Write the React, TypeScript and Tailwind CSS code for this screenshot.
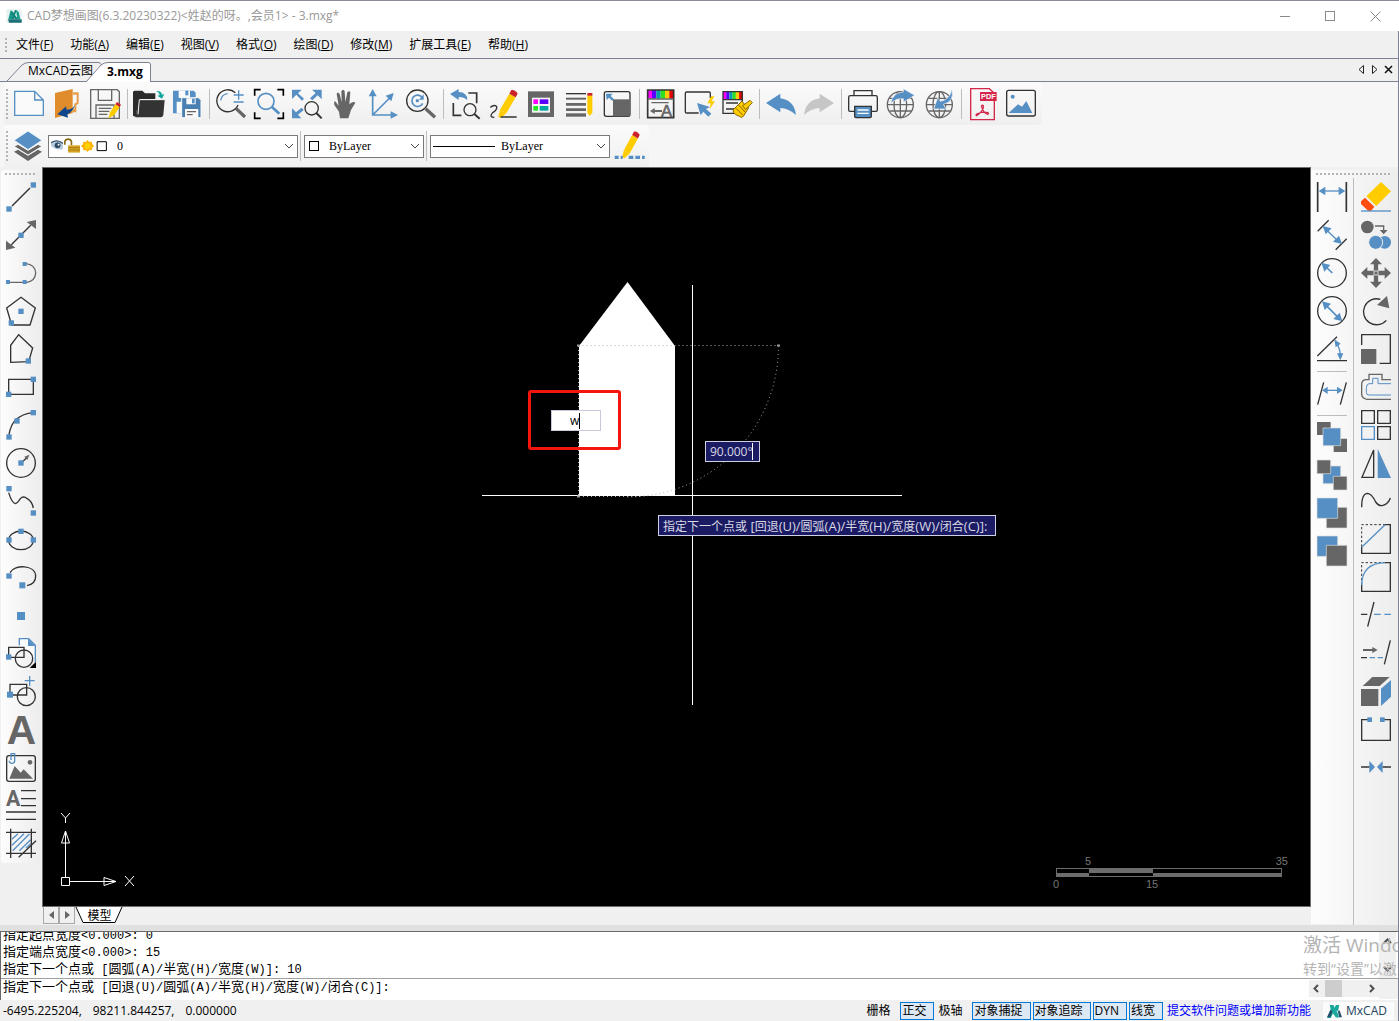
import type { ReactNode } from "react";

const BLUE = "#568fc4";
const GRAY = "#666666";
const INK = "#333333";

type Tool = { name: string; art: ReactNode } | "sep";

const Node = ({ x, y, s = 16 }: { x: number; y: number; s?: number }) => (
  <rect x={x - s / 2} y={y - s / 2} width={s} height={s} fill={BLUE} stroke="none" />
);

const Pencil = () => (
  <g stroke="none">
    <path d="M31 84l5-22 19 11-17 14z" fill="#ffcc00" />
    <path d="M36 62L64 14l19 11-28 48z" fill="#ffcc00" />
    <path d="M64 14l6-11q12-2 19 11l-6 11z" fill="#cc2229" />
  </g>
);

const Rainbow = ({ x, y, w, h }: { x: number; y: number; w: number; h: number }) => (
  <g stroke="none">
    {["#ff00ff", "#5a00ff", "#00a0a0", "#30e020", "#ffcc00", "#e00000"].map((c, i) => (
      <rect key={c} x={x + (i * w) / 6} y={y} width={w / 6} height={h} fill={c} />
    ))}
  </g>
);

const Globe = () => (
  <g stroke={GRAY} strokeWidth={4}>
    <circle cx="43" cy="47" r="39" />
    <ellipse cx="43" cy="47" rx="19" ry="39" />
    <path d="M43 8v78M4 47h78M11 28h64M11 66h64" />
  </g>
);

const topTools: Tool[] = [
  { name: "新建", art: <path d="M2 7h60l26 26v46H2zM62 7v26h26" stroke={BLUE} fill="#fafafa" /> },
  {
    name: "打开云图",
    art: (
      <g stroke="none">
        <path d="M9 12L62 0v72L9 87z" fill="#e08c2c" />
        <path d="M62 10h18v34l-7 4v22h-11v-10h5V44l7-4V17H62z" fill="#e8a04c" />
        <path d="M70 44Q66 60 44 62l-2-10-26 24 32 10-2-10Q64 68 70 44z" fill="#10478c" />
      </g>
    ),
  },
  {
    name: "保存",
    art: (
      <>
        <path d="M2 2h80l6 6v80H2zM25 2v32h40V2M18 88V48h54v40M26 58h38M26 67h32M26 76h26" stroke={GRAY} />
        <path d="M56 88l4-18 16-24 13 8-16 24z" fill="#ffcc00" stroke="none" />
        <path d="M76 46l5-7 12 8-4 7z" fill="#cc2229" stroke="none" />
      </>
    ),
  },
  "sep",
  {
    name: "打开",
    art: (
      <g stroke="none">
        <path d="M-3 8l4-3h24l8 8h31v17H20L8 66l-3 18-8-4z" fill="#2b2b2b" />
        <path d="M14 33h78l-4 45q-2 7-8 7H4z" fill={INK} />
        <path d="M12 76L16 32h76" stroke="#f4f4f4" strokeWidth="3" fill="none" />
        <path d="M66 6q16-2 18 11l7-2-7 14-14-9 7-1q-1-9-11-13z" fill="#10a59c" />
      </g>
    ),
  },
  {
    name: "全部保存",
    art: (
      <g stroke="none">
        <path d="M3 5h62l6 6v62H3z" fill={BLUE} />
        <path d="M20 5h34v22H20zM14 38h16v35H14z" fill="#fafafa" />
        <path d="M29 26h50l8 8v52H29z" fill="#4a7fb2" stroke="#fafafa" strokeWidth="3" />
        <path d="M43 28h28v18H43zM39 60h40v26H39z" fill="#fafafa" />
        <path d="M60 29h8v14h-8z" fill={BLUE} />
        <path d="M45 68h27M45 77h17" stroke={GRAY} strokeWidth="4" />
        <path d="M40 5h9v14h-9z" fill={BLUE} />
      </g>
    ),
  },
  "sep",
  {
    name: "实时缩放",
    art: (
      <>
        <path d="M58 11A33 33 0 1 0 66 48" />
        <path d="M14 34Q17 16 35 14M53 18h30M68 4v28M53 39h30" stroke={BLUE} />
        <path d="M60 58l27 26" stroke={GRAY} strokeWidth={10} />
      </>
    ),
  },
  {
    name: "窗口缩放",
    art: (
      <>
        <path d="M2 20V2h18M70 2h18v18M88 70v18H70M20 88H2V70" stroke="#000" strokeWidth={5} />
        <circle cx="36" cy="37" r="24" stroke={BLUE} strokeWidth={5} />
        <path d="M54 54l22 20" stroke={BLUE} strokeWidth={8} />
      </>
    ),
  },
  {
    name: "范围缩放",
    art: (
      <>
        <path d="M0 2h29L18 13l18 16-6 6L13 17 0 30zM89 2v29L77 19 61 34l-7-6 17-16L60 2zM0 88V58l12 12 17-14 6 7-17 14 10 11z" fill={BLUE} stroke="none" />
        <circle cx="59" cy="58" r="20" />
        <path d="M73 72l16 16" strokeWidth={6} />
      </>
    ),
  },
  {
    name: "平移",
    art: (
      <path
        d="M30 88l-3-20L13 48q-2-15 4-10l9 12L20 15q3-9 9 0l6 25-1-33q6-9 10 0l2 32 6-29q6-7 9 0l-3 36 5-4q8-5 13-1L63 63l-8 25z"
        fill={GRAY}
        stroke="none"
      />
    ),
  },
  {
    name: "坐标系",
    art: (
      <>
        <path d="M14 18v60h58M14 78L68 24" stroke={BLUE} strokeWidth={5} />
        <path d="M2 22L14 0l12 22zM68 67l22 11-22 11zM77 12L70 37 53 20z" fill={BLUE} stroke="none" />
      </>
    ),
  },
  {
    name: "动态观察",
    art: (
      <>
        <circle cx="34" cy="35" r="32" />
        <path d="M49 26A17 17 0 1 0 50 43" stroke={BLUE} strokeWidth={5} />
        <path d="M53 16v16H39z" fill={BLUE} stroke="none" />
        <circle cx="34" cy="35" r="5" fill={BLUE} stroke="none" />
        <path d="M59 59l28 26" stroke={GRAY} strokeWidth={10} />
      </>
    ),
  },
  "sep",
  {
    name: "上一视图",
    art: (
      <>
        <path d="M0 15L26 0v9q26 1 26 24Q42 24 26 24v9z" fill={BLUE} stroke="none" />
        <path d="M55 12h25v31M10 42v37h24" strokeWidth={5} />
        <circle cx="60" cy="62" r="18" />
        <path d="M73 75l16 14" strokeWidth={6} />
      </>
    ),
  },
  {
    name: "绘制",
    art: (
      <>
        <Pencil />
        <path d="M7 55q14-10 19-2 2 9-12 18-12 14 5 14M38 84h48" />
      </>
    ),
  },
  {
    name: "图块",
    art: (
      <g stroke="none">
        <path d="M6 7h78v77H6z" fill={GRAY} />
        <path d="M18 26h54v45H18z" fill="#f4f4f4" />
        <path d="M22 31h14v14H22z" fill="#ff00ff" />
        <path d="M41 31h26v14H41z" fill="#5a00ff" />
        <path d="M22 51h14v14H22z" fill="#20e820" />
        <path d="M41 51h26v14H41z" fill="#00a7a0" />
      </g>
    ),
  },
  {
    name: "线型",
    art: (
      <>
        <path d="M6 14h60" strokeWidth={4} />
        <path d="M6 29h60" stroke={GRAY} strokeWidth={6} />
        <path d="M6 46h60M6 62h60" stroke={GRAY} strokeWidth={8} />
        <path d="M6 78h60" stroke={GRAY} strokeWidth={10} />
        <path d="M70 19h15v52l-8 10-7-10z" fill="#ffcc00" stroke="none" />
        <path d="M70 12h15v8H70z" fill="#cc2229" stroke="none" />
      </>
    ),
  },
  {
    name: "比例",
    art: (
      <>
        <rect x="7" y="8" width="77" height="74" rx="6" />
        <path d="M33 31h50v51H33z" fill={GRAY} stroke="none" />
        <path d="M12 14h20l-6 7 10 10-5 5-10-10-7 7z" fill={BLUE} stroke="none" />
      </>
    ),
  },
  "sep",
  {
    name: "文字样式",
    art: (
      <>
        <Rainbow x={5} y={3} w={78} h={26} />
        <path d="M5 3h78v83H5z" strokeWidth={5} />
        <path d="M5 30h78M16 41h52" stroke={GRAY} />
        <path d="M20 66h28" stroke={GRAY} strokeWidth={6} />
        <path d="M12 66l14-9v18z" fill={GRAY} stroke="none" />
        <text x="45" y="83" fontSize="50" fontFamily="Liberation Sans" fill={GRAY} stroke={GRAY} strokeWidth="2">A</text>
      </>
    ),
  },
  {
    name: "快速选择",
    art: (
      <>
        <path d="M44 72H8q-4 0-4-4V13q0-4 4-4h67q4 0 4 4v14" />
        <path d="M39 42l39 12-12 6 16 14-9 9-15-15-8 11z" fill={BLUE} stroke="none" />
        <path d="M82 22L70 43h10l-3 17 16-23H83l8-15z" fill="#ffcc00" stroke="none" />
      </>
    ),
  },
  {
    name: "特性匹配",
    art: (
      <>
        <Rainbow x={3} y={8} w={58} h={24} />
        <path d="M3 8h58v65H3zM3 32h58M12 42h36M12 60h26" />
        <path d="M34 62l26-26q6 12 20 20L64 82q-6 6-12 0-12-4-18-12z" fill="#ffcc00" stroke="#8a6500" strokeWidth="3" />
        <path d="M62 50l22-16 7 7-20 21z" fill="#ffcc00" stroke="#8a6500" strokeWidth="3" />
        <path d="M42 58l20 20M50 48l20 22" stroke="#8a6500" strokeWidth="3" />
      </>
    ),
  },
  "sep",
  { name: "撤销", art: <path d="M0 42l43-28v14q42 6 47 50Q68 58 43 57v13z" fill={BLUE} stroke="none" /> },
  { name: "重做", art: <path d="M90 42L47 14v14Q5 34 0 78q22-20 47-21v13z" fill="#c6c6c6" stroke="none" /> },
  "sep",
  {
    name: "打印",
    art: (
      <>
        <path d="M18 20V5h54v15M20 67H6q-4 0-4-4V25q0-5 5-5h76q5 0 5 5v38q0 4-4 4H70" />
        <path d="M20 52h50v30q0 4-4 4H24q-4 0-4-4z" fill={BLUE} />
        <path d="M28 63h34M28 73h34" stroke="#fff" />
      </>
    ),
  },
  {
    name: "发布",
    art: (
      <>
        <Globe />
        <path d="M14 44Q20 10 52 9V-1l34 20-34 21V29Q30 27 14 44z" fill={BLUE} stroke="#f6f6f6" strokeWidth={2} />
      </>
    ),
  },
  {
    name: "下载",
    art: (
      <g transform="translate(3 0)">
        <Globe />
        <path d="M80 0q10 38-25 46l9 14H26l12-34 8 11Q76 32 80 0z" fill={BLUE} stroke="#f6f6f6" strokeWidth={2} />
      </g>
    ),
  },
  "sep",
  {
    name: "输出 PDF",
    art: (
      <>
        <path d="M8-1h56l15 14v79H8z" stroke="#d3274b" />
        <path d="M36 9h50v27H36z" fill="#d3274b" stroke="none" />
        <text x="39" y="31" fontSize="22" fontWeight="700" fontFamily="Liberation Sans" fill="#fff" stroke="none">PDF</text>
        <path d="M40 50q8-4 6 6-4 14-20 24-5-2 3-6 14-6 28-4 8 2 2 6-14-4-19-26" stroke="#d3274b" />
      </>
    ),
  },
  {
    name: "输出图片",
    art: (
      <>
        <rect x="2" y="4" width="86" height="77" rx="6" />
        <circle cx="20" cy="23" r="6" fill={BLUE} stroke="none" />
        <path d="M8 72l28-26 12 7 13-17 18 36z" fill={BLUE} stroke="none" />
      </>
    ),
  },
];

const drawTools: Tool[] = [
  { name: "直线", art: <><path d="M18 72L72 18" /><Node x={9} y={81} /><Node x={82} y={9} /></> },
  {
    name: "构造线",
    art: (
      <>
        <path d="M16 74l58-58" />
        <path d="M90 0v27L62 6zM0 90V62l28 21z" fill={GRAY} stroke="none" />
        <Node x={45} y={46} />
      </>
    ),
  },
  {
    name: "多段线",
    art: (
      <>
        <path d="M6 73h56q26-4 27-28-1-24-28-28H56" stroke={GRAY} />
        <Node x={6} y={72} s={12} /><Node x={56} y={72} s={12} /><Node x={56} y={18} s={12} />
      </>
    ),
  },
  { name: "正多边形", art: <><path d="M45 4l43 32-16 51H17L2 36z" /><Node x={45} y={46} /><Node x={16} y={81} /></> },
  { name: "多边形", art: <><path d="M38 2l42 40-12 41-54 2V34z" /><Node x={67} y={81} /></> },
  { name: "矩形", art: <><path d="M8 22h74v45H8z" /><Node x={8} y={67} /><Node x={82} y={22} /></> },
  { name: "圆弧", art: <><path d="M9 74Q18 14 82 8" /><Node x={9} y={81} /><Node x={33} y={33} /><Node x={82} y={8} /></> },
  {
    name: "圆",
    art: (
      <>
        <circle cx="45" cy="45" r="43" />
        <path d="M45 45l20-18" />
        <path d="M70 20l-6 16-9-10z" fill={GRAY} stroke="none" />
        <Node x={45} y={45} />
      </>
    ),
  },
  {
    name: "样条曲线",
    art: (
      <>
        <path d="M8 20Q18 52 28 53 34 52 43 38 52 28 64 38 78 46 82 66" />
        <Node x={9} y={8} /><Node x={82} y={81} />
      </>
    ),
  },
  {
    name: "椭圆",
    art: <><ellipse cx="45" cy="49" rx="37" ry="28" /><Node x={9} y={48} /><Node x={82} y={48} /><Node x={45} y={22} /></>,
  },
  { name: "椭圆弧", art: <><path d="M12 32C26 6 88 8 89 42q0 24-26 29" /><Node x={9} y={42} /><Node x={49} y={70} s={18} /></> },
  { name: "点", art: <Node x={45} y={48} s={24} /> },
  {
    name: "插入块",
    art: (
      <>
        <path d="M40 22V2h28l20 20v50" stroke={BLUE} fill="#fafafa" />
        <path d="M66 2l22 22H66z" fill={BLUE} stroke="none" />
        <path d="M8 28h46v30H8z" />
        <circle cx="54" cy="62" r="26" />
        <path d="M90 71v19H71z" fill="#000" stroke="none" />
        <Node x={8} y={57} />
      </>
    ),
  },
  {
    name: "创建块",
    art: (
      <>
        <path d="M12 25h50v32H12z" />
        <circle cx="61" cy="62" r="27" />
        <path d="M56 14h30M71 0v30" stroke={BLUE} />
        <Node x={12} y={56} s={18} />
      </>
    ),
  },
  {
    name: "单行文字",
    art: (
      <text x="46" y="90" textAnchor="middle" fontSize="122" fontWeight="700" fontFamily="Liberation Sans" fill={GRAY} stroke="none">A</text>
    ),
  },
  {
    name: "插入图片",
    art: (
      <>
        <rect x="2" y="11" width="86" height="77" rx="7" />
        <path d="M10 80l16-38 18 20 9-10 28 28z" fill={GRAY} stroke="none" />
        <circle cx="72" cy="31" r="7" fill={GRAY} stroke="none" />
        <path d="M10 26q0 8 8 8t8-8V5H15v19" stroke={BLUE} />
      </>
    ),
  },
  {
    name: "多行文字",
    art: (
      <>
        <text x="0" y="48" fontSize="64" fontWeight="700" fontFamily="Roboto" fill={GRAY} stroke="none">A</text>
        <path d="M45 2h45M45 26h45M45 47h45M0 66h90M0 88h90" />
      </>
    ),
  },
  {
    name: "图案填充",
    art: (
      <>
        <path d="M18 34l18-17M18 52l36-35M20 68l50-50M40 68l34-33M60 60l14-13" stroke={BLUE} />
        <path d="M14 2v88M76 2v88M0 13h90M0 76h90M38 88l52-50" />
      </>
    ),
  },
];

const dimTools: Tool[] = [
  {
    name: "线性标注",
    art: (
      <>
        <path d="M2 0v90M88 0v90" strokeWidth={5} />
        <path d="M20 27h50" stroke={BLUE} />
        <path d="M5 27l20-13v26zM85 27L65 14v26z" fill={BLUE} stroke="none" />
      </>
    ),
  },
  {
    name: "对齐标注",
    art: (
      <>
        <path d="M2 34L35 1M56 89l33-33" />
        <path d="M28 29l35 34" stroke={BLUE} />
        <path d="M17 18l27 7-18 18zM75 72l-27-7 18-18z" fill={BLUE} stroke="none" />
      </>
    ),
  },
  {
    name: "半径标注",
    art: (
      <>
        <circle cx="45" cy="45" r="43" />
        <path d="M25 25l21 20" stroke={BLUE} strokeWidth={5} />
        <path d="M13 14l27 7-18 20z" fill={BLUE} stroke="none" />
      </>
    ),
  },
  {
    name: "直径标注",
    art: (
      <>
        <circle cx="45" cy="45" r="43" />
        <path d="M28 29l36 36" stroke={BLUE} strokeWidth={5} />
        <path d="M15 16l27 7-19 19zM76 76l-27-7 19-19z" fill={BLUE} stroke="none" />
      </>
    ),
  },
  {
    name: "角度标注",
    art: (
      <>
        <path d="M1 66L60 8M0 80h90" />
        <path d="M58 26q12 18 12 42" stroke={BLUE} />
        <path d="M52 16l19 13-15 11zM70 79L60 58h19z" fill={BLUE} stroke="none" />
      </>
    ),
  },
  "sep",
  {
    name: "倾斜标注",
    art: (
      <>
        <path d="M2 80L20 13M70 80l18-67" stroke={INK} />
        <path d="M28 37h36" stroke={BLUE} />
        <path d="M15 37l17-11v22zM77 37L60 26v22z" fill={BLUE} stroke="none" />
      </>
    ),
  },
  "sep",
  {
    name: "前置",
    art: (
      <g stroke="none">
        <path d="M0 0h41v39H0zM50 50h40v40H50z" fill={GRAY} />
        <path d="M18 18h53v53H18z" fill={BLUE} stroke="#ddd" strokeWidth="2" />
      </g>
    ),
  },
  {
    name: "后置",
    art: (
      <g stroke="#ddd" strokeWidth="2">
        <path d="M18 18h53v53H18z" fill={BLUE} />
        <path d="M0 0h41v41H0zM49 49h41v41H49z" fill={GRAY} />
      </g>
    ),
  },
  {
    name: "置于之上",
    art: (
      <g stroke="#ddd" strokeWidth="2">
        <path d="M28 28h62v62H28z" fill={GRAY} />
        <path d="M0 0h62v61H0z" fill={BLUE} />
      </g>
    ),
  },
  {
    name: "置于之下",
    art: (
      <g stroke="#ddd" strokeWidth="2">
        <path d="M0 0h62v61H0z" fill={BLUE} />
        <path d="M28 28h62v62H28z" fill={GRAY} />
      </g>
    ),
  },
];

const editTools: Tool[] = [
  {
    name: "删除",
    art: (
      <g stroke="none">
        <path d="M60 0l30 28-44 44-30-29z" fill="#ffcc00" />
        <path d="M12 47l28 27-10 13H22L0 66v-8z" fill="#ff4d0d" />
        <path d="M0 85h90v4H0z" fill={BLUE} />
      </g>
    ),
  },
  {
    name: "复制",
    art: (
      <>
        <circle cx="19" cy="21" r="19" fill={GRAY} stroke="none" />
        <path d="M42 18h26v14" stroke={GRAY} />
        <path d="M56 30h24L68 43z" fill={GRAY} stroke="none" />
        <circle cx="71" cy="67" r="19" fill={BLUE} stroke="none" />
        <circle cx="44" cy="67" r="21" fill={BLUE} stroke="#f2f2f2" strokeWidth={3} />
      </>
    ),
  },
  {
    name: "移动",
    art: (
      <>
        <path d="M45 12v66M12 45h66" stroke={GRAY} strokeWidth={13} />
        <path d="M27 19L45 0l18 19zM27 71l18 19 18-19zM19 27L0 45l19 18zM71 27l19 18-19 18z" fill={GRAY} stroke="none" />
        <path d="M39 39h12v12H39z" stroke="#ddd" strokeWidth={3} />
      </>
    ),
  },
  {
    name: "旋转",
    art: (
      <>
        <path d="M58 10A39 39 0 1 0 76 73" />
        <path d="M78 0l7 37-37-10z" fill={GRAY} stroke="none" />
      </>
    ),
  },
  {
    name: "缩放",
    art: (
      <>
        <path d="M2 33V2h86v86H56" />
        <path d="M0 45h46v45H0z" fill={GRAY} stroke="none" />
      </>
    ),
  },
  {
    name: "偏移",
    art: (
      <>
        <path d="M90 23H63V7H24v16H14Q2 24 2 38v30q2 12 16 14h72" stroke={GRAY} />
        <path d="M90 35H51V19H35v16H24q-8 2-8 12v14q0 8 8 8h66" stroke={BLUE} strokeWidth={3} />
      </>
    ),
  },
  { name: "阵列", art: <><path d="M2 2h38v38H2zM50 2h38v38H50zM50 50h38v38H50z" /><path d="M2 50h38v38H2z" stroke={BLUE} /></> },
  { name: "镜像", art: <><path d="M3 88L38 6v82z" /><path d="M50 2l40 88H50z" fill={BLUE} stroke="none" /></> },
  { name: "样条编辑", art: <path d="M2 64Q2 24 18 22 32 22 44 48 54 62 66 58 82 54 88 36" /> },
  {
    name: "倒角",
    art: (
      <>
        <path d="M2 68V2h70" strokeDasharray="7 6" strokeWidth={3} />
        <path d="M2 68v20h86V2H72" />
        <path d="M2 70L72 2" stroke={BLUE} />
      </>
    ),
  },
  {
    name: "圆角",
    art: (
      <>
        <path d="M2 68V2h70" strokeDasharray="7 6" strokeWidth={3} />
        <path d="M2 68v20h86V2H72" />
        <path d="M2 70Q2 4 72 2" stroke={BLUE} />
      </>
    ),
  },
  { name: "修剪", art: <><path d="M20 80L39 6M0 43h19" /><path d="M39 43h20M70 43h20" stroke={BLUE} /></> },
  {
    name: "延伸",
    art: (
      <>
        <path d="M70 79L88 7M0 59h18M6 36h30" />
        <path d="M50 36L34 27v18z" fill={GRAY} stroke="none" />
        <path d="M26 59h16M50 59h16" stroke={BLUE} />
      </>
    ),
  },
  {
    name: "长方体",
    art: (
      <g stroke="none">
        <path d="M0 39h52v51H0z" fill={GRAY} />
        <path d="M5 30L34 3h52L56 30z" fill={GRAY} />
        <path d="M60 38l30-26v50L60 90z" fill={BLUE} />
      </g>
    ),
  },
  { name: "打断", art: <><path d="M26 17H2v62h86V17H64" /><Node x={26} y={17} s={14} /><Node x={64} y={17} s={14} /></> },
  { name: "合并", art: <><path d="M0 45h26M64 45h26" /><path d="M25 27l17 18-17 18zM65 27L48 45l17 18z" fill={BLUE} stroke="none" /></> },
];

const menus = [
  ["文件", "F"], ["功能", "A"], ["编辑", "E"], ["视图", "V"], ["格式", "O"],
  ["绘图", "D"], ["修改", "M"], ["扩展工具", "E"], ["帮助", "H"],
];

const modes = [
  { label: "栅格", on: false },
  { label: "正交", on: true },
  { label: "极轴", on: false },
  { label: "对象捕捉", on: true },
  { label: "对象追踪", on: true },
  { label: "DYN", on: true },
  { label: "线宽", on: true },
];

const coords = ["-6495.225204,", "98211.844257,", "0.000000"];
const history = ["指定起点宽度<0.000>: 0", "指定端点宽度<0.000>: 15", "指定下一个点或 [圆弧(A)/半宽(H)/宽度(W)]: 10"];
const promptText = "指定下一个点或 [回退(U)/圆弧(A)/半宽(H)/宽度(W)/闭合(C)]:";

function ToolButton({ name, art }: { name: string; art: ReactNode }) {
  return (
    <button type="button" aria-label={name} className="flex size-[38px] shrink-0 items-center justify-center">
      <svg viewBox="0 0 90 90" className="size-[30px] overflow-visible" fill="none" stroke={INK} strokeWidth={4}>
        {art}
      </svg>
    </button>
  );
}

function GripV({ className }: { className: string }) {
  return (
    <span className={`w-[2px] shrink-0 bg-[repeating-linear-gradient(#b4b4b4_0_2px,transparent_2px_4px)] ${className}`} />
  );
}

function GripH({ className }: { className: string }) {
  return (
    <span className={`block h-[2px] bg-[repeating-linear-gradient(90deg,#b4b4b4_0_2px,transparent_2px_4px)] ${className}`} />
  );
}

function Column({ tools }: { tools: Tool[] }) {
  return (
    <div className="flex flex-col items-center">
      {tools.map((t, i) =>
        t === "sep" ? <span key={i} className="mb-[2px] mt-[3px] h-px w-[30px] bg-[#bdbdbd]" /> : <ToolButton key={i} {...t} />
      )}
    </div>
  );
}

function Combo({ label, value, width, children }: { label: string; value: string; width: string; children: ReactNode }) {
  return (
    <div className={`relative flex h-[23px] items-center border border-[#7a7a7a] bg-white ${width}`}>
      <span className="pointer-events-none absolute left-[2px] flex items-center">{children}</span>
      <select
        aria-label={label}
        defaultValue={value}
        className={`h-full w-full appearance-none bg-transparent font-[Liberation_Serif,serif] text-xs text-black outline-none ${
          label === "图层" ? "pl-[68px]" : label === "颜色" ? "pl-6" : "pl-[70px]"
        }`}
      >
        <option>{value}</option>
      </select>
      <svg viewBox="0 0 10 6" className="pointer-events-none absolute right-[3px] h-[6px] w-[10px]" fill="none" stroke="#444">
        <path d="M1 1l4 4 4-4" />
      </svg>
    </div>
  );
}

// Ideographs and Latin use different sizes in the command window and its hints.
function MixedText({ text, han, latin }: { text: string; han: string; latin: string }) {
  return (
    <>
      {text.split(/([\u4e00-\u9fff]+)/).map((part, i) => (
        <span key={i} className={`whitespace-pre ${i % 2 ? han : latin}`}>{part}</span>
      ))}
    </>
  );
}

function Logo({ className }: { className: string }) {
  return (
    <svg viewBox="0 0 34 32" className={className}>
      <path d="M7 2h8l3 9-9 19H1l8-16z" fill="#1aa79c" />
      <path d="M8 12l5 4-5 12H1z" fill="#25526b" />
      <path d="M20 2h7l-2 12-8 4-3-5z" fill="#1aa79c" />
      <path d="M15 13l8 4 4 12h-7l-6-9z" fill="#1aa79c" />
      <path d="M24 15l4-1 5 14h-6z" fill="#25526b" />
    </svg>
  );
}

function TitleBar() {
  return (
    <header className="flex h-[31px] items-center border-t border-[#8b8b95] bg-white pl-[6px] text-xs text-[#999]">
      <svg viewBox="0 0 48 48" className="size-4">
        <path d="M1 4h46v40H1z" fill="#e4f1f0" />
        <path d="M6 34h41v10H9z" fill="#1c6f75" />
        <path d="M14 6l8 8-5 20H7zM30 6l8 6 5 22h-9z" fill="#159b8b" />
        <path d="M18 8l18 26h-9L14 16zM32 6l-9 28h-8l12-28z" fill="#12857c" />
      </svg>
      <h1 className="ml-[5px]">CAD梦想画图(6.3.20230322)&lt;姓赵的呀。,会员1&gt; - 3.mxg*</h1>
      <div className="ml-auto flex">
        <button type="button" aria-label="最小化" className="flex h-7 w-[45px] items-center justify-center">
          <span className="h-px w-[10px] bg-[#8a8a8a]" />
        </button>
        <button type="button" aria-label="最大化" className="flex h-7 w-[45px] items-center justify-center">
          <span className="size-[10px] border border-[#8a8a8a]" />
        </button>
        <button type="button" aria-label="关闭" className="flex h-7 w-[47px] items-center justify-center">
          <svg viewBox="0 0 11 11" className="size-[11px]" stroke="#8a8a8a">
            <path d="M.5.5l10 10M10.5.5l-10 10" />
          </svg>
        </button>
      </div>
    </header>
  );
}

function FileTabs() {
  return (
    <div className="flex h-[24px] shrink-0 items-stretch border-y border-[#7c8294] text-xs text-black">
      <button type="button" className="relative w-[86px] shrink-0 pl-7 pt-[2px] text-left whitespace-nowrap">
        <svg viewBox="0 0 102 22" className="absolute left-0 top-0 h-[22px] w-[102px]" fill="none" stroke="#7c8294">
          <path d="M7 22L22 6Q25 3.500 29 3.500H99L102 6" />
        </svg>
        <span className="relative">MxCAD云图</span>
      </button>
      <button type="button" className="relative h-[23px] w-[66px] shrink-0 pl-[21px] pt-[2px] text-left font-bold">
        <svg viewBox="0 0 66 23" className="absolute left-0 top-0 h-[23px] w-[66px]" fill="#fff" stroke="#7c8294">
          <path d="M0 23L15 6Q18 3.500 22 3.500H62.500Q64.500 3.500 64.500 6V23" />
        </svg>
        <span className="relative">3.mxg</span>
      </button>
      <div className="ml-auto flex items-center gap-[6px] pb-[2px] pr-[5px]">
        <button type="button" aria-label="上一个">
          <svg viewBox="0 0 6 9" className="h-[9px] w-[6px]" fill="none" stroke="#222"><path d="M5.500 .5v8L1 4.500z" /></svg>
        </button>
        <button type="button" aria-label="下一个" className="ml-[2px]">
          <svg viewBox="0 0 6 9" className="h-[9px] w-[6px]" fill="none" stroke="#222"><path d="M.5 .5v8L5 4.500z" /></svg>
        </button>
        <button type="button" aria-label="关闭图纸">
          <svg viewBox="0 0 9 9" className="size-[9px]" stroke="#111" strokeWidth="1.500"><path d="M1 1l7 7M8 1L1 8" /></svg>
        </button>
      </div>
    </div>
  );
}

function LayerBar() {
  return (
    <div className="ml-1 flex h-[42px] w-[645px] items-center rounded bg-linear-to-b from-[#fbfbfb] to-[#f0f0f0] pl-[2px]">
      <GripV className="h-[30px]" />
      <button type="button" aria-label="图层管理" className="ml-[6px] flex w-[34px] justify-start">
        <svg viewBox="0 0 84 90" className="h-[30px] w-[28px]" stroke="none">
          <path d="M0 62l12-6 30 18 30-18 12 6-42 28z" fill={GRAY} />
          <path d="M0 46l12-6 30 18 30-18 12 6-42 26z" fill={GRAY} stroke="#f6f6f6" strokeWidth="3" />
          <path d="M42 0l42 28-42 28L0 28z" fill={BLUE} stroke="#f6f6f6" strokeWidth="3" />
        </svg>
      </button>
      <Combo label="图层" value="0" width="w-[250px]">
        <svg viewBox="0 0 176 48" className="h-4 w-[58px]">
          <path d="M0 14q18-12 36 2v18q-20 4-36-10z" fill="#b8cde0" />
          <path d="M0 14q18-12 36 2" stroke="#34536e" strokeWidth="4" fill="none" />
          <circle cx="20" cy="22" r="9" fill="#2e4a66" />
          <circle cx="23" cy="20" r="3" fill="#fff" />
          <path d="M42 20V10q2-7 10-7t10 7v12" stroke="#8a6914" strokeWidth="5" fill="none" />
          <path d="M52 22h36v22H52z" fill="#d9a520" />
          <path d="M52 29h36M52 36h36" stroke="#8a6914" strokeWidth="2" />
          <path d="M111 6l5 6 8-1 1 8 6 5-6 5-1 8-8-1-5 6-5-6-8 1-1-8-6-5 6-5 1-8 8 1z" fill="#ffb000" />
          <circle cx="111" cy="24" r="9" fill="#ffd400" />
          <path d="M140 11h28v27h-28z" fill="#fff" stroke="#000" strokeWidth="3" />
        </svg>
      </Combo>
      <span className="mx-[2px] h-[30px] w-px bg-[#bdbdbd]" />
      <Combo label="颜色" value="ByLayer" width="ml-px w-[120px]">
        <span className="ml-[2px] size-[10px] border border-black" />
      </Combo>
      <span className="mx-[2px] h-[30px] w-px bg-[#bdbdbd]" />
      <Combo label="线型" value="ByLayer" width="ml-px w-[180px]">
        <span className="h-px w-[62px] bg-black" />
      </Combo>
      <button type="button" aria-label="线型管理" className="ml-1 flex">
        <svg viewBox="0 0 96 90" className="h-[30px] w-8">
          <g transform="translate(-3 -1) scale(.9 .95)"><Pencil /></g>
          <path d="M2 79h12M20 79h6M44 79h14M64 79h14M84 79h8" stroke={BLUE} strokeWidth="10" />
        </svg>
      </button>
    </div>
  );
}

function Viewport() {
  return (
    <main className="relative min-h-0 flex-1 overflow-hidden border border-[#6e6e6e] bg-black">
      <svg viewBox="43 168 1267 738" className="absolute left-0 top-0 h-[738px] w-[1267px]" fill="none">
        <path d="M627.500 282L675 346V496H579V346z" fill="#fff" />
        <path d="M482 495.500H902M692.500 285V705" stroke="#fff" />
        <g stroke="#b0b0b0" strokeDasharray="1 3">
          <path d="M578.500 345.500H779M578.500 346V497M579 496.500H640M778.500 346A151 151 0 0 1 627.500 497" />
        </g>
        <path d="M577 345.500h3M777 345.500h3M577 496.500h3" stroke="#999" strokeWidth="2" />
      </svg>

      {/* width entry and its highlight */}
      <div className="absolute left-[485px] top-[222px] flex h-[60px] w-[93px] items-center rounded-[3px] border-3 border-[#f5150c] pl-5">
        <input
          aria-label="命令"
          defaultValue="w"
          className="h-[21px] w-[50px] border border-[#c9c9dd] bg-white pl-[18px] font-[Open_Sans,sans-serif] text-xs text-black outline-none"
        />
        <span className="absolute left-[48px] top-[20px] h-4 w-px bg-black" />
      </div>

      <div className="absolute left-[662px] top-[273px] flex h-[21px] w-[55px] items-center border border-[#d0d0e4] bg-[#1b1b63] pl-1 text-xs text-[#d8d8e4]">
        90.000°
        <span className="absolute right-[6px] h-[17px] w-px bg-white" />
      </div>
      <div className="absolute left-[615px] top-[347px] h-[21px] whitespace-nowrap border border-[#d0d0e4] bg-[#1b1b63] pl-1 pr-2 leading-[18px] text-[#d8d8e4]">
        <MixedText text={promptText} han="text-xs" latin="text-[13px]" />
      </div>

      <svg viewBox="0 0 84 78" className="absolute bottom-[18px] left-[16px] h-[78px] w-[84px]" fill="none" stroke="#fff">
        <path d="M2.500 67.500h8v8h-8zM6.500 67V33M11 71.500h34M6.500 21l-4 12h8zM6.500 21v12M45 67.500v8l12-4zM45 71.500h12" />
        <path d="M2 3l4.500 5L11 3M6.500 8v5M66 66l9 10M75 66l-9 10" />
      </svg>

      <div className="absolute bottom-[15px] right-[20px] w-[240px] font-[Liberation_Sans,sans-serif] text-[11px] leading-[14px] text-[#757575]">
        <div className="flex pl-[35px]">
          <span className="w-[184px]">5</span>
          <span className="ml-auto pr-[2px]">35</span>
        </div>
        <div className="ml-[6px] mr-[8px] grid h-[9px] grid-cols-[32px_64px_1fr] grid-rows-2 border border-[#6c6c6c]">
          <span /><span className="bg-[#6c6c6c]" /><span />
          <span className="bg-[#6c6c6c]" /><span /><span className="bg-[#6c6c6c]" />
        </div>
        <div className="flex pl-[3px]">
          <span className="w-[93px]">0</span>
          <span>15</span>
        </div>
      </div>
    </main>
  );
}

function ModelTabs() {
  return (
    <div className="flex h-[17px] shrink-0 items-stretch pl-px text-xs leading-4 text-black">
      {["M8 1v8L3 5z", "M3 1v8l5-4z"].map((d, i) => (
        <button key={d} type="button" aria-label={i ? "下一布局" : "上一布局"} className="flex w-4 items-center justify-center border border-t-0 border-[#a8a8a8]">
          <svg viewBox="0 0 10 10" className="size-[10px]" fill="#666"><path d={d} /></svg>
        </button>
      ))}
      <button type="button" className="relative w-[49px] text-center">
        <svg viewBox="0 0 49 17" className="absolute inset-0 h-[17px] w-[49px]" fill="#fff" stroke="#000">
          <path d="M1 0l7 15.500H40L47 0" />
        </svg>
        <span className="relative">模型</span>
      </button>
    </div>
  );
}

function CommandWindow() {
  return (
    <section className="relative mt-px h-[75px] shrink-0 overflow-hidden border-t-[6px] border-[#e0e0e0] text-black">
      <div className="h-full border-l border-t border-[#696969] bg-white font-[Liberation_Mono,Noto_Sans_CJK_SC,monospace]">
        <div className="flex h-[47px] border-b border-[#a0a0a0]">
          <div className="flex flex-1 flex-col justify-end overflow-hidden pl-[2px] leading-[17px]">
            {history.map((line) => (
              <p key={line} className="h-[17px] shrink-0"><MixedText text={line} han="text-[13px]" latin="text-xs" /></p>
            ))}
          </div>
          <div className="flex w-[17px] flex-col items-center justify-between bg-[#f0f0f0] py-[6px]">
            <svg viewBox="0 0 9 6" className="h-[6px] w-[9px]" fill="none" stroke="#505050" strokeWidth="2"><path d="M1 5l3.500-3.500L8 5" /></svg>
            <svg viewBox="0 0 9 6" className="h-[6px] w-[9px]" fill="none" stroke="#505050" strokeWidth="2"><path d="M1 1l3.500 3.500L8 1" /></svg>
          </div>
          <span className="w-[2px]" />
        </div>
        <div className="flex h-[20px]">
          <p className="flex-1 pl-[2px] leading-[17px]"><MixedText text={promptText} han="text-[13px]" latin="text-xs" /></p>
          <div className="mt-px flex h-[17px] w-[70px] items-center bg-[#f0f0f0] px-1">
            <svg viewBox="0 0 6 9" className="h-[9px] w-[6px]" fill="none" stroke="#505050" strokeWidth="2"><path d="M5 1L1.500 4.500 5 8" /></svg>
            <span className="ml-[6px] h-[17px] w-[17px] bg-[#cdcdcd]" />
            <svg viewBox="0 0 6 9" className="ml-auto h-[9px] w-[6px]" fill="none" stroke="#505050" strokeWidth="2"><path d="M1 1l3.500 3.500L1 8" /></svg>
          </div>
          <span className="w-[19px] bg-[#f0f0f0]" />
        </div>
      </div>
      <div className="pointer-events-none absolute left-[calc(100%-95px)] top-0 whitespace-nowrap text-[#b4b4b4]">
        <p className="text-[19px] leading-[28px]">激活 Windows</p>
        <p className="text-[14px] leading-[20px]">转到“设置”以激活</p>
      </div>
    </section>
  );
}

function StatusBar() {
  return (
    <footer className="flex h-[21px] shrink-0 items-center bg-[#f0f0f0] pl-[3px] pt-px text-xs text-black">
      <div className="flex gap-[11px]">
        {coords.map((c) => <span key={c}>{c}</span>)}
      </div>
      <div className="ml-auto flex gap-[2px]">
        {modes.map((m) => (
          <button
            key={m.label}
            type="button"
            aria-pressed={m.on}
            className={`h-[18px] border pl-px pr-[7px] leading-4 whitespace-nowrap ${
              m.on ? "border-[#0078d7] bg-[#dce9f5]" : "border-transparent"
            }`}
          >
            {m.label}
          </button>
        ))}
      </div>
      <a href="#feedback" className="ml-1 whitespace-nowrap text-[#0000ff]">提交软件问题或增加新功能</a>
      <span className="ml-3 mr-1 flex h-[18px] w-[71px] items-center gap-[3px] bg-[#fbfbfb] pl-[3px] text-[#25425e]">
        <Logo className="h-[15px] w-[17px]" />
        MxCAD
      </span>
    </footer>
  );
}

export default function App() {
  return (
    <div className="flex h-screen flex-col overflow-hidden bg-[#f0f0f0] font-[Open_Sans,Noto_Sans_CJK_SC,sans-serif]">
      <TitleBar />
      <div className="flex min-h-0 flex-1 flex-col border-r border-[#7c8294]">
        <nav className="flex h-[27px] shrink-0 items-center pl-[5px] text-xs text-black">
          <GripV className="h-[14px]" />
          <div className="ml-[1px] flex gap-px">
            {menus.map(([label, key]) => (
              <button key={label} type="button" className="px-2 whitespace-nowrap">
                {label}(<u>{key}</u>)
              </button>
            ))}
          </div>
        </nav>
        <FileTabs />
        <div className="shrink-0 bg-[#f6f6f6]">
          <div className="ml-1 flex h-[43px] w-[1038px] items-center rounded bg-linear-to-b from-[#fbfbfb] to-[#efefef] pl-[2px]">
            <GripV className="h-[30px]" />
            <div className="ml-[2px] flex items-center">
              {topTools.map((t, i) =>
                t === "sep" ? <span key={i} className="ml-[3px] mr-[2px] h-[30px] w-px bg-[#bdbdbd]" /> : <ToolButton key={i} {...t} />
              )}
            </div>
          </div>
          <LayerBar />
        </div>

        <div className="flex min-h-0 flex-1">
          <aside className="w-[42px] shrink-0">
            <div className="ml-px mr-[2px] mt-[3px] rounded bg-linear-to-r from-[#fdfdfd] to-[#ededed] pb-[1px] pt-[3px]">
              <GripH className="mx-1 mb-[3px] w-[30px]" />
              <Column tools={drawTools} />
            </div>
          </aside>
          <div className="flex min-w-0 flex-1 flex-col">
            <Viewport />
            <ModelTabs />
          </div>
          <aside className="mt-[3px] w-[87px] shrink-0 bg-linear-to-r from-[#fdfdfd] to-[#ededed] pt-[3px]">
            <GripH className="mb-[3px] ml-[5px] w-[75px]" />
            <div className="flex h-full">
              <div className="w-[42px]"><Column tools={dimTools} /></div>
              <div className="w-[45px] border-l border-[#bdbdbd]"><Column tools={editTools} /></div>
            </div>
          </aside>
        </div>

        <CommandWindow />
        <StatusBar />
      </div>
    </div>
  );
}
